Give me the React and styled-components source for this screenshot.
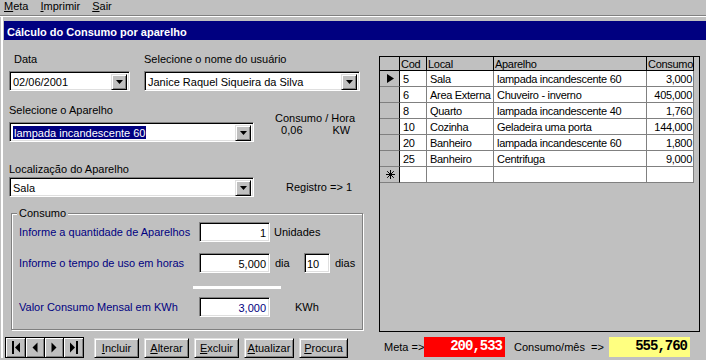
import React from 'react';
import styled, { createGlobalStyle, css } from 'styled-components';

const Global = createGlobalStyle`
  html, body { margin: 0; padding: 0; background: #c0c0c0; }
  body {
    font-family: "Liberation Sans", Arial, sans-serif;
    font-size: 11px;
    color: #000;
    width: 706px;
    height: 360px;
    overflow: hidden;
  }
  * { box-sizing: border-box; }
`;

const sunken = css`
  background: #fff;
  border: 1px solid;
  border-color: #808080 #fff #fff #808080;
  box-shadow: inset 1px 1px 0 #000, inset -1px -1px 0 #dfdfdf;
`;

const raised = css`
  background: #c0c0c0;
  border: 1px solid;
  border-color: #dfdfdf #000 #000 #dfdfdf;
  box-shadow: inset 1px 1px 0 #fff, inset -1px -1px 0 #808080;
`;

const MenuBar = styled.div`
  display: flex;
  gap: 12px;
  height: 16px;
  padding-left: 4px;
  line-height: 13px;
  border-bottom: 1px solid #808080;
  box-shadow: 0 1px 0 #fff;
`;

const MenuItem = styled.span`
  u { text-decoration: underline; }
`;

const Window = styled.div`
  margin-left: 1px;
  margin-top: 1px;
  padding-top: 4px;
  border-left: 2px solid #fff;
`;

const TitleBar = styled.div`
  margin-left: 1px;
  height: 19px;
  background: #000080;
  color: #fff;
  font-weight: bold;
  line-height: 13px;
  padding: 5px 0 0 3px;
  white-space: nowrap;
`;

const Body = styled.div`
  display: flex;
`;

const LeftPane = styled.div`
  width: 376px;
  padding: 13px 0 0 2px;
  display: flex;
  flex-direction: column;
`;

const Form = styled.div`
  margin-left: 4px;
  display: flex;
  flex-direction: column;
`;

const Row = styled.div`
  display: flex;
  align-items: ${p => p.$align || 'flex-start'};
  margin-top: ${p => p.$mt || 0}px;
`;

const Field = styled.div`
  display: flex;
  flex-direction: column;
  gap: ${p => p.$gap || 0}px;
  width: ${p => (p.$w ? `${p.$w}px` : 'auto')};
`;

const Label = styled.div`
  height: 13px;
  line-height: 13px;
  white-space: nowrap;
  padding-left: ${p => p.$indent || 0}px;
  color: ${p => (p.$navy ? '#000080' : '#000')};
`;

const Combo = styled.div`
  ${sunken};
  width: ${p => p.$w}px;
  height: 20px;
  padding: 2px;
  display: flex;
`;

const ComboText = styled.div`
  flex: 1;
  line-height: 16px;
  padding-left: 1px;
  white-space: nowrap;
  overflow: hidden;
`;

const Selected = styled.span`
  background: #000080;
  color: #fff;
  padding: 1px 1px 1px 1px;
`;

const DropBtn = styled.div`
  ${raised};
  width: 16px;
  height: 16px;
  display: flex;
  align-items: center;
  justify-content: center;
`;

const Info = styled.div`
  margin-left: ${p => p.$ml || 0}px;
  margin-top: ${p => p.$mt || 0}px;
  line-height: 12px;
  white-space: pre;
`;

const Group = styled.fieldset`
  margin: 9px 0 0 2px;
  padding: 0;
  width: 352px;
  min-inline-size: 0;
  border: 1px solid #808080;
  box-shadow: inset 1px 1px 0 #fff, 1px 1px 0 #fff;
`;

const Legend = styled.legend`
  margin-left: 5px;
  padding: 0 2px;
  line-height: 14px;
  height: 14px;
  background: #c0c0c0;
`;

const GroupInner = styled.div`
  padding: 2px 0 12px 7px;
  display: flex;
  flex-direction: column;
`;

const InputLabel = styled.div`
  width: 180px;
  color: #000080;
  white-space: nowrap;
  line-height: 13px;
`;

const TextBox = styled.div`
  ${sunken};
  width: ${p => p.$w}px;
  height: 20px;
  padding: 2px ${p => (p.$left ? 0 : 3)}px 0 ${p => (p.$left ? 2 : 0)}px;
  line-height: 16px;
  text-align: ${p => (p.$left ? 'left' : 'right')};
  color: ${p => (p.$navy ? '#000080' : '#000')};
  margin-left: ${p => p.$ml || 0}px;
`;

const Unit = styled.span`
  margin-left: ${p => p.$ml || 0}px;
  width: ${p => (p.$w ? `${p.$w}px` : 'auto')};
  white-space: nowrap;
`;

const WhiteLine = styled.div`
  margin: 13px 0 0 174px;
  width: 88px;
  height: 3px;
  background: #fff;
`;

const BottomBar = styled.div`
  display: flex;
  align-items: center;
  margin-top: 7px;
`;

const Nav = styled.div`
  display: flex;
  width: 79px;
  height: 21px;
  border: 1px solid #000;
`;

const NavBtn = styled.div`
  width: ${p => p.$w}px;
  height: 19px;
  background: #c0c0c0;
  border-right: ${p => (p.$last ? 'none' : '1px solid #000')};
  box-shadow: inset 1px 1px 0 #fff, inset -1px -1px 0 #808080;
  display: flex;
  align-items: center;
  justify-content: center;
`;

const Buttons = styled.div`
  display: flex;
  gap: 5px;
  margin-left: 10px;
`;

const Button = styled.div`
  ${raised};
  width: ${p => p.$w}px;
  height: 20px;
  line-height: 18px;
  text-align: center;
  white-space: nowrap;
`;

const RightPane = styled.div`
  padding-top: 16px;
  display: flex;
  flex-direction: column;
`;

const GridBox = styled.div`
  width: 321px;
  height: 276px;
  border: 1px solid #000;
`;

const Grid = styled.div`
  display: grid;
  grid-template-columns: 20px 27px 67px 153px 47px;
  grid-auto-rows: 16px;
  grid-template-rows: 14px;
  width: 314px;
  letter-spacing: -0.3px;
`;

const Cell = styled.div`
  background: ${p => (p.$head || p.$ind ? '#c0c0c0' : '#fff')};
  border-right: 1px solid ${p => (p.$head || p.$ind ? '#000' : '#808080')};
  border-bottom: 1px solid ${p => (p.$head ? '#000' : '#808080')};
  padding: ${p => (p.$head ? '1px 0 0 1px' : '0 1px 0 3px')};
  line-height: ${p => (p.$head ? 13 : 16)}px;
  white-space: nowrap;
  overflow: hidden;
  text-align: ${p => (p.$right ? 'right' : 'left')};
  display: ${p => (p.$ind ? 'flex' : 'block')};
  align-items: center;
  justify-content: center;
`;

const Totals = styled.div`
  display: flex;
  align-items: center;
  margin-top: 5px;
`;

const TotalLabel = styled.span`
  margin-left: ${p => p.$ml}px;
  width: ${p => p.$w}px;
  white-space: pre;
`;

const Value = styled.div`
  width: 81px;
  height: 20px;
  background: ${p => p.$bg};
  color: ${p => p.$fg};
  font-family: "Liberation Mono", "DejaVu Sans Mono", monospace;
  font-weight: bold;
  font-size: 14px;
  letter-spacing: -1px;
  line-height: 14px;
  padding: 2px 3px 0 0;
  text-align: right;
`;

const Arrow = () => (
  <svg width="7" height="4" viewBox="0 0 7 4">
    <polygon points="0,0 7,0 3.5,4" fill="#000" />
  </svg>
);

const DropDown = ({ w, children }) => (
  <Combo $w={w}>
    <ComboText>{children}</ComboText>
    <DropBtn>
      <Arrow />
    </DropBtn>
  </Combo>
);

const NavIcon = ({ kind }) => {
  const tri = kind === 'first' || kind === 'prev'
    ? (kind === 'first' ? '9,1.5 4,6.5 9,11.5' : '7.5,1.5 2.5,6.5 7.5,11.5')
    : (kind === 'last' ? '1,1.5 6,6.5 1,11.5' : '2.5,1.5 7.5,6.5 2.5,11.5');
  return (
    <svg width="10" height="13" viewBox="0 0 10 13">
      {kind === 'first' && <rect x="1" y="0" width="2" height="13" fill="#000" />}
      {kind === 'last' && <rect x="7" y="0" width="2" height="13" fill="#000" />}
      <polygon points={tri} fill="#000" />
    </svg>
  );
};

const Pointer = () => (
  <svg width="7" height="9" viewBox="0 0 7 9">
    <polygon points="0,0 7,4.5 0,9" fill="#000" />
  </svg>
);

const Star = () => (
  <svg width="9" height="9" viewBox="0 0 9 9">
    <g stroke="#000" strokeWidth="1">
      <line x1="4.5" y1="0" x2="4.5" y2="9" />
      <line x1="0" y1="4.5" x2="9" y2="4.5" />
      <line x1="1.2" y1="1.2" x2="7.8" y2="7.8" />
      <line x1="7.8" y1="1.2" x2="1.2" y2="7.8" />
    </g>
  </svg>
);

const rows = [
  ['5', 'Sala', 'lampada incandescente 60', '3,000'],
  ['6', 'Area Externa', 'Chuveiro - inverno', '405,000'],
  ['8', 'Quarto', 'lampada incandescente 40', '1,760'],
  ['10', 'Cozinha', 'Geladeira uma porta', '144,000'],
  ['20', 'Banheiro', 'lampada incandescente 60', '1,800'],
  ['25', 'Banheiro', 'Centrifuga', '9,000'],
];

const actions = [
  ['I', 'ncluir', 45],
  ['A', 'lterar', 45],
  ['E', 'xcluir', 45],
  ['A', 'tualizar', 50],
  ['P', 'rocura', 49],
];

export default function App() {
  return (
    <>
      <Global />
      <MenuBar>
        <MenuItem><u>M</u>eta</MenuItem>
        <MenuItem><u>I</u>mprimir</MenuItem>
        <MenuItem><u>S</u>air</MenuItem>
      </MenuBar>
      <Window>
        <TitleBar>Cálculo do Consumo por aparelho</TitleBar>
        <Body>
          <LeftPane>
            <Form>
              <Row>
                <Field $w={135} $gap={5}>
                  <Label $indent={5}>Data</Label>
                  <DropDown w={121}>02/06/2001</DropDown>
                </Field>
                <Field $gap={5}>
                  <Label>Selecione o nome do usuário</Label>
                  <DropDown w={216}>Janice Raquel Siqueira da Silva</DropDown>
                </Field>
              </Row>
              <Row $mt={13}>
                <Field $gap={5}>
                  <Label>Selecione o Aparelho</Label>
                  <DropDown w={245}>
                    <Selected>lampada incandescente 60</Selected>
                  </DropDown>
                </Field>
                <Info $ml={21} $mt={8}>
                  <div>Consumo / Hora</div>
                  <div>{'  0,06'}<Unit $ml={30}>KW</Unit></div>
                </Info>
              </Row>
              <Row $mt={21}>
                <Field $gap={1}>
                  <Label>Localização do Aparelho</Label>
                  <DropDown w={245}>Sala</DropDown>
                </Field>
                <Info $ml={32} $mt={18}>Registro =&gt; 1</Info>
              </Row>
              <Group>
                <Legend>Consumo</Legend>
                <GroupInner>
                  <Row $align="center">
                    <InputLabel>Informe a quantidade de Aparelhos</InputLabel>
                    <TextBox $w={71}>1</TextBox>
                    <Unit $ml={4}>Unidades</Unit>
                  </Row>
                  <Row $align="center" $mt={11}>
                    <InputLabel>Informe o tempo de uso em horas</InputLabel>
                    <TextBox $w={71}>5,000</TextBox>
                    <Unit $ml={5} $w={29}>dia</Unit>
                    <TextBox $w={26} $left>10</TextBox>
                    <Unit $ml={5}>dias</Unit>
                  </Row>
                  <WhiteLine />
                  <Row $align="center" $mt={8}>
                    <InputLabel>Valor Consumo Mensal em KWh</InputLabel>
                    <TextBox $w={71} $navy>3,000</TextBox>
                    <Unit $ml={25}>KWh</Unit>
                  </Row>
                </GroupInner>
              </Group>
            </Form>
            <BottomBar>
              <Nav>
                <NavBtn $w={20}><NavIcon kind="first" /></NavBtn>
                <NavBtn $w={19}><NavIcon kind="prev" /></NavBtn>
                <NavBtn $w={19}><NavIcon kind="next" /></NavBtn>
                <NavBtn $w={19} $last><NavIcon kind="last" /></NavBtn>
              </Nav>
              <Buttons>
                {actions.map(([k, rest, w], i) => (
                  <Button key={i} $w={w}><u>{k}</u>{rest}</Button>
                ))}
              </Buttons>
            </BottomBar>
          </LeftPane>
          <RightPane>
            <GridBox>
              <Grid>
                <Cell $head />
                <Cell $head>Cod</Cell>
                <Cell $head>Local</Cell>
                <Cell $head>Aparelho</Cell>
                <Cell $head>Consumo</Cell>
                {rows.map((r, i) => (
                  <React.Fragment key={i}>
                    <Cell $ind>{i === 0 && <Pointer />}</Cell>
                    <Cell>{r[0]}</Cell>
                    <Cell>{r[1]}</Cell>
                    <Cell>{r[2]}</Cell>
                    <Cell $right>{r[3]}</Cell>
                  </React.Fragment>
                ))}
                <Cell $ind><Star /></Cell>
                <Cell />
                <Cell />
                <Cell />
                <Cell />
              </Grid>
            </GridBox>
            <Totals>
              <TotalLabel $ml={5} $w={40}>Meta =&gt;</TotalLabel>
              <Value $bg="#ff0000" $fg="#fff">200,533</Value>
              <TotalLabel $ml={9} $w={95}>{'Consumo/mês  =>'}</TotalLabel>
              <Value $bg="#ffff80" $fg="#000">555,760</Value>
            </Totals>
          </RightPane>
        </Body>
      </Window>
    </>
  );
}
